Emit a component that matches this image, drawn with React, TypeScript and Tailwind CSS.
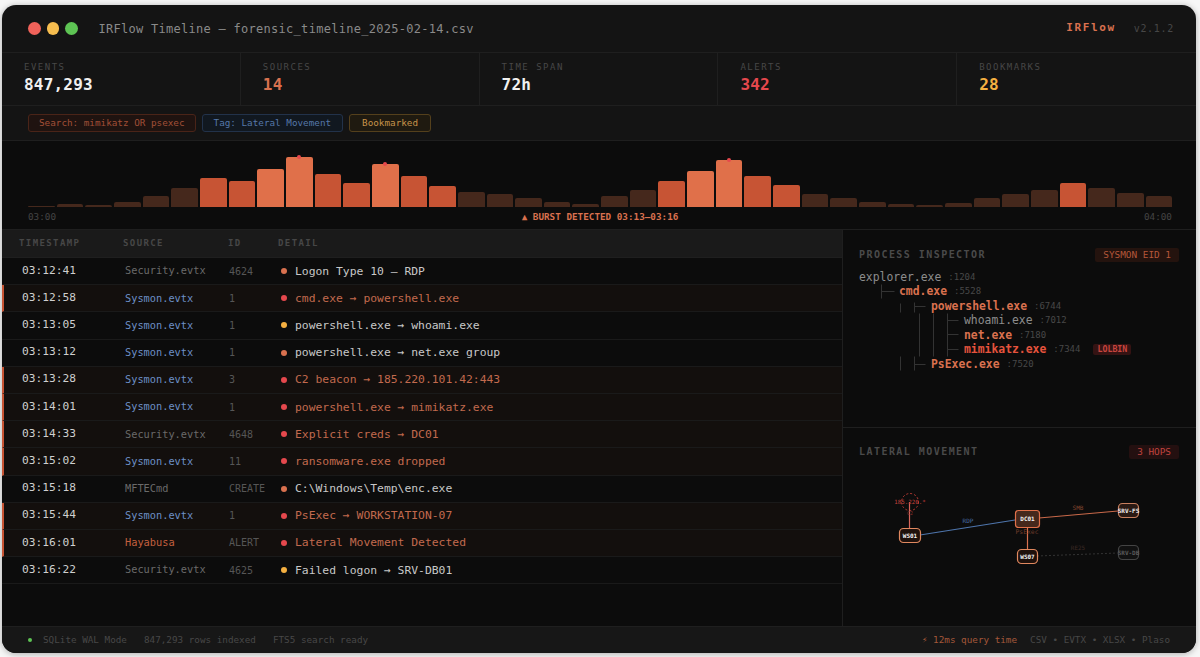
const mono = "font-['DejaVu_Sans_Mono',monospace]";

const stats = [
  { label: "EVENTS", value: "847,293", color: "text-[#f0f0f0]" },
  { label: "SOURCES", value: "14", color: "text-[#d9714f]" },
  { label: "TIME SPAN", value: "72h", color: "text-[#f0f0f0]" },
  { label: "ALERTS", value: "342", color: "text-[#e5484d]" },
  { label: "BOOKMARKS", value: "28", color: "text-[#f5b041]" },
];

// bar heights in px, level: 0 dim, 1 medium, 2 hot, peak marks a burst
const bars = [
  [1, 0], [3, 0], [2, 0], [5, 0], [11, 0], [19, 0], [29, 1], [26, 1], [38, 2], [50, 2, 1],
  [33, 1], [24, 1], [43, 2, 1], [31, 1], [21, 1], [15, 0], [13, 0], [9, 0], [5, 0], [3, 0],
  [11, 0], [17, 0], [26, 1], [36, 2], [47, 2, 1], [31, 1], [22, 1], [13, 0], [9, 0], [5, 0],
  [3, 0], [2, 0], [4, 0], [9, 0], [13, 0], [17, 0], [24, 1], [19, 0], [14, 0], [11, 0],
];

const rows = [
  { time: "03:12:41", source: "Security.evtx", id: "4624", detail: "Logon Type 10 — RDP", dot: "bg-[#d9714f]", kind: "sec" },
  { time: "03:12:58", source: "Sysmon.evtx", id: "1", detail: "cmd.exe → powershell.exe", dot: "bg-[#e5484d]", kind: "sys", alert: true },
  { time: "03:13:05", source: "Sysmon.evtx", id: "1", detail: "powershell.exe → whoami.exe", dot: "bg-[#f5b041]", kind: "sys" },
  { time: "03:13:12", source: "Sysmon.evtx", id: "1", detail: "powershell.exe → net.exe group", dot: "bg-[#d9714f]", kind: "sys" },
  { time: "03:13:28", source: "Sysmon.evtx", id: "3", detail: "C2 beacon → 185.220.101.42:443", dot: "bg-[#e5484d]", kind: "sys", alert: true },
  { time: "03:14:01", source: "Sysmon.evtx", id: "1", detail: "powershell.exe → mimikatz.exe", dot: "bg-[#e5484d]", kind: "sys", alert: true },
  { time: "03:14:33", source: "Security.evtx", id: "4648", detail: "Explicit creds → DC01", dot: "bg-[#e5484d]", kind: "sec", alert: true },
  { time: "03:15:02", source: "Sysmon.evtx", id: "11", detail: "ransomware.exe dropped", dot: "bg-[#e5484d]", kind: "sys", alert: true },
  { time: "03:15:18", source: "MFTECmd", id: "CREATE", detail: "C:\\Windows\\Temp\\enc.exe", dot: "bg-[#d9714f]", kind: "sec" },
  { time: "03:15:44", source: "Sysmon.evtx", id: "1", detail: "PsExec → WORKSTATION-07", dot: "bg-[#e5484d]", kind: "sys", alert: true },
  { time: "03:16:01", source: "Hayabusa", id: "ALERT", detail: "Lateral Movement Detected", dot: "bg-[#e5484d]", kind: "hay", alert: true },
  { time: "03:16:22", source: "Security.evtx", id: "4625", detail: "Failed logon → SRV-DB01", dot: "bg-[#f5b041]", kind: "sec" },
];

const tree = [
  { name: "explorer.exe", pid: ":1204", pad: "pl-0", color: "text-[#8c8c8c]" },
  { name: "cmd.exe", pid: ":5528", pad: "pl-[40px]", color: "text-[#d9714f] font-bold" },
  { name: "powershell.exe", pid: ":6744", pad: "pl-[72px]", color: "text-[#d9714f] font-bold" },
  { name: "whoami.exe", pid: ":7012", pad: "pl-[105px]", color: "text-[#8c8c8c]" },
  { name: "net.exe", pid: ":7180", pad: "pl-[105px]", color: "text-[#d9714f] font-bold" },
  { name: "mimikatz.exe", pid: ":7344", pad: "pl-[105px]", color: "text-[#e5533d] font-bold", tag: "LOLBIN" },
  { name: "PsExec.exe", pid: ":7520", pad: "pl-[72px]", color: "text-[#d9714f] font-bold" },
];

function Dots() {
  return (
    <div className="flex gap-[6px]">
      <span className="h-[12.5px] w-[12.5px] rounded-full bg-[#f0625a]" />
      <span className="h-[12.5px] w-[12.5px] rounded-full bg-[#f6bd4f]" />
      <span className="h-[12.5px] w-[12.5px] rounded-full bg-[#5ec454]" />
    </div>
  );
}

function Histogram() {
  return (
    <div className="h-[89px] shrink-0 border-b border-[#1f1f1f] bg-[#0c0c0c] pl-[26px] pr-[24px]">
      <div className="flex h-[66px] items-end gap-[2px]">
        {bars.map(([h, level, peak], i) => (
          <div
            key={i}
            style={{ height: h }}
            className={
              "relative flex-1 rounded-t-[2px] " +
              (level === 2 ? "bg-[#e0704a]" : level === 1 ? "bg-[#c75434]" : "bg-[#45281c]")
            }
          >
            {peak ? (
              <span className="absolute left-1/2 top-[-2px] h-1 w-1 -translate-x-1/2 rounded-full bg-[#e5484d]" />
            ) : null}
          </div>
        ))}
      </div>
      <div className="mt-[4px] flex justify-between text-[9.3px] leading-[12px]">
        <span className="text-[#444]">03:00</span>
        <span className="font-bold text-[#d9714f]">▲ BURST DETECTED 03:13—03:16</span>
        <span className="text-[#444]">04:00</span>
      </div>
    </div>
  );
}

function EventTable() {
  return (
    <div className="flex min-w-0 flex-1 flex-col bg-[#0c0c0c]">
      <div className="flex h-[28px] shrink-0 items-center border-b border-[#1f1f1f] bg-[#1a1a1a] pl-[17px] text-[9px] font-bold tracking-[1.4px] text-[#474747]">
        <span className="w-[104px]">TIMESTAMP</span>
        <span className="w-[105px]">SOURCE</span>
        <span className="w-[50px]">ID</span>
        <span>DETAIL</span>
      </div>
      {rows.map((row) => (
        <div
          key={row.time}
          className={
            "flex h-[27.2px] shrink-0 items-center border-b border-[#1a1a1a] " +
            (row.alert ? "border-l-2 border-l-[#c75434] bg-[#130f0d] pl-[18px]" : "pl-[20px]")
          }
        >
          <span className="w-[103px] text-[11.2px] text-[#cfcfcf]">{row.time}</span>
          <span
            className={
              "w-[104px] text-[10.3px] " +
              (row.kind === "sys" ? "text-[#6d8fc7]" : row.kind === "hay" ? "text-[#c4603f]" : "text-[#6a6a6a]")
            }
          >
            {row.source}
          </span>
          <span className="w-[52px] text-[10px] text-[#565656]">{row.id}</span>
          <span className={"mr-[8px] h-[6px] w-[6px] rounded-full " + row.dot} />
          <span className={"text-[11.36px] " + (row.alert ? "text-[#c26a4e]" : "text-[#c8c8c8]")}>{row.detail}</span>
        </div>
      ))}
    </div>
  );
}

function TreeLines() {
  // lines drawn in the coordinates of the tree block, origin at its top left
  const segs = [
    [22, 14, 22, 28], [22, 21, 35, 21],
    [41, 33, 41, 42], [55, 32, 55, 42], [55, 36, 66, 36],
    [60, 43, 60, 86], [74, 43, 74, 86], [88, 43, 88, 86],
    [88, 50, 99, 50], [88, 64, 99, 64], [88, 79, 99, 79],
    [41, 86, 41, 100], [55, 86, 55, 100], [55, 94, 66, 94],
  ];
  return (
    <svg className="absolute left-0 top-0 h-[110px] w-[120px]" viewBox="0 0 120 110" fill="none">
      {segs.map(([x1, y1, x2, y2], i) => (
        <line key={i} x1={x1 + 0.5} y1={y1 + 0.5} x2={x2 + 0.5} y2={y2 + 0.5} stroke="#333" />
      ))}
    </svg>
  );
}

function ProcessInspector() {
  return (
    <div className="h-[198px] shrink-0 border-b border-[#1f1f1f] pl-[16px] pr-[17px] pt-[17px]">
      <div className="flex items-center justify-between">
        <span className="text-[10px] font-bold tracking-[1.45px] text-[#4a4a4a]">PROCESS INSPECTOR</span>
        <span className="rounded-[2px] bg-[#24130e] px-2 text-[9.4px] leading-[14px] text-[#b5573a]">SYSMON EID 1</span>
      </div>
      <div className="relative mt-[8px]">
        <TreeLines />
        {tree.map((p) => (
          <div key={p.name} className={"flex h-[14.5px] items-center text-[11.4px] " + p.pad}>
            <span className={p.color}>{p.name}</span>
            <span className="ml-[7px] text-[9px] text-[#484848]">{p.pid}</span>
            {p.tag ? (
              <span className="ml-[13px] rounded-[2px] bg-[#351313] px-[4px] text-[8.3px] font-bold leading-[11px] text-[#c8453f]">
                {p.tag}
              </span>
            ) : null}
          </div>
        ))}
      </div>
    </div>
  );
}

function Node({ x, y, w, h, label, fill, stroke, text, r = 4 }: { x: number; y: number; w: number; h: number; label: string; fill: string; stroke: string; text: string; r?: number }) {
  return (
    <g>
      <rect x={x} y={y} width={w} height={h} rx={r} fill={fill} stroke={stroke} strokeWidth="1.2" />
      <text x={x + w / 2} y={y + h / 2 + 2} textAnchor="middle" fontSize="6" fontWeight="700" fill={text}>
        {label}
      </text>
    </g>
  );
}

function LateralMovement() {
  return (
    <div className="flex-1 pl-[16px] pr-[17px] pt-[16px]">
      <div className="flex items-center justify-between">
        <span className="text-[10px] font-bold tracking-[1.45px] text-[#4a4a4a]">LATERAL MOVEMENT</span>
        <span className="rounded-[2px] bg-[#241010] px-2 text-[9.4px] leading-[14px] text-[#c0443f]">3 HOPS</span>
      </div>
      {/* graph coords: origin at 859,485 in the window */}
      <svg className="mt-[26px] h-[90px] w-[320px]" viewBox="0 0 320 90" fill="none">
        <circle cx="51" cy="17" r="8.5" stroke="#b83a33" strokeDasharray="2 2" />
        <line x1="50.5" y1="17" x2="50.5" y2="44" stroke="#d9655a" strokeWidth="1.2" />
        <line x1="61" y1="50" x2="156" y2="35" stroke="#4f76ad" strokeWidth="1.2" />
        <line x1="180" y1="33" x2="259" y2="26" stroke="#c9694a" strokeWidth="1.2" />
        <line x1="168.5" y1="42" x2="168.5" y2="64" stroke="#d9714f" strokeWidth="1.2" />
        <line x1="178" y1="71" x2="259" y2="68" stroke="#333" strokeDasharray="2 2" />
        <text x="51" y="19" textAnchor="middle" fontSize="5.8" fill="#c4423c">185.220.*</text>
        <text x="51" y="29.5" textAnchor="middle" fontSize="5" fill="#8a332e">C2</text>
        <text x="109" y="38" textAnchor="middle" fontSize="6" fill="#4a6fa5">RDP</text>
        <text x="219" y="25" textAnchor="middle" fontSize="6" fill="#84452f">SMB</text>
        <text x="168" y="48.5" textAnchor="middle" fontSize="6.4" fill="#6e3b2a">PsExec</text>
        <text x="219" y="65" textAnchor="middle" fontSize="6" fill="#3d2a24">RE25</text>
        <Node x={40.5} y={43.5} w={21} h={14} label="WS01" fill="#1e110c" stroke="#e0885f" text="#f2f2f2" />
        <Node x={156.5} y={25.5} w={24} h={17} label="DC01" fill="#45281c" stroke="#e0704a" text="#f2f2f2" r={3} />
        <Node x={158.5} y={64.5} w={20} h={14} label="WS07" fill="#1e110c" stroke="#e0885f" text="#f2f2f2" />
        <Node x={259.5} y={18.5} w={20} h={14} label="SRV-FS" fill="#2a1a14" stroke="#c9805f" text="#eee" />
        <Node x={259.5} y={60.5} w={20} h={14} label="SRV-DB" fill="#111" stroke="#444" text="#5a5a5a" />
      </svg>
    </div>
  );
}

export default function App() {
  return (
    <div className={"h-[657px] w-[1200px] overflow-hidden bg-[#f6f6f6] pb-[4px] pl-[2px] pr-[4px] pt-[5px] " + mono}>
      <div className="flex h-full flex-col overflow-hidden rounded-[14px] bg-[#141414] shadow-[0_1px_6px_rgba(0,0,0,0.3)]">
        <div className="flex h-[48px] shrink-0 items-center border-b border-[#1f1f1f] pl-[26px] pr-[22px]">
          <Dots />
          <span className="ml-[21px] flex-1 text-[12px] tracking-[0.28px] text-[#8a8a8a]">
            IRFlow Timeline — forensic_timeline_2025-02-14.csv
          </span>
          <span className="text-[11px] font-bold tracking-[1.6px] text-[#d9714f]">IRFlow</span>
          <span className="ml-[18px] text-[10px] tracking-[0.7px] text-[#474747]">v2.1.2</span>
        </div>

        <div className="grid h-[53px] shrink-0 grid-cols-5 border-b border-[#1f1f1f]">
          {stats.map((s) => (
            <div key={s.label} className="border-r border-[#1f1f1f] pl-[22px] pt-[9px] last:border-r-0">
              <div className="text-[9px] leading-[11px] tracking-[1.5px] text-[#474747]">{s.label}</div>
              <div className={"mt-[2px] text-[16px] font-bold leading-[20px] tracking-[0.2px] " + s.color}>{s.value}</div>
            </div>
          ))}
        </div>

        <div className="flex h-[35px] shrink-0 items-center gap-[6px] border-b border-[#1f1f1f] pl-[26px] text-[9.3px]">
          <span className="rounded-[3px] border border-[#4a2418] bg-[#1f1310] px-[10px] leading-[16px] text-[#a14f37]">Search: mimikatz OR psexec</span>
          <span className="rounded-[3px] border border-[#22324a] bg-[#111820] px-[11px] leading-[16px] text-[#5577a8]">Tag: Lateral Movement</span>
          <span className="rounded-[3px] border border-[#54401c] bg-[#1f1a10] px-[12px] leading-[16px] text-[#c4924a]">Bookmarked</span>
        </div>

        <Histogram />

        <div className="flex min-h-0 flex-1">
          <EventTable />
          <div className="flex w-[354px] shrink-0 flex-col border-l border-[#1f1f1f] bg-[#0c0c0c]">
            <ProcessInspector />
            <LateralMovement />
          </div>
        </div>

        <div className="flex h-[27px] shrink-0 items-center border-t border-[#1f1f1f] bg-[#171717] pl-[26px] pr-[26px] text-[9.3px] text-[#474747]">
          <span className="h-1 w-1 rounded-full bg-[#5ec454]" />
          <span className="ml-[11px]">SQLite WAL Mode</span>
          <span className="ml-[17px]">847,293 rows indexed</span>
          <span className="ml-[17px] flex-1">FTS5 search ready</span>
          <span className="text-[#a5583a]">⚡ 12ms query time</span>
          <span className="ml-[13px]">CSV • EVTX • XLSX • Plaso</span>
        </div>
      </div>
    </div>
  );
}
